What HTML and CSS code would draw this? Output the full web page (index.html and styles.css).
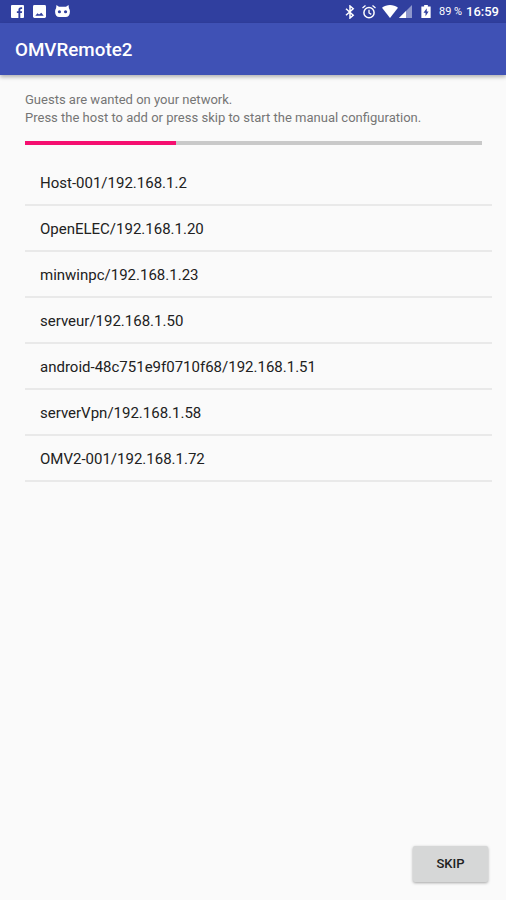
FILE: index.html
```html
<!DOCTYPE html>
<html lang="en">
<head>
    <meta charset="UTF-8">
    <meta name="viewport" content="width=device-width, initial-scale=1.0">
    <title>OMVRemote2</title>
    <link rel="stylesheet" href="styles.css">
</head>
<body>
    <!-- Status Bar -->
    <div class="status-bar">
        <div class="status-left">
            <svg width="13" height="13" viewBox="0 0 14 14">
                <rect width="14" height="14" rx="1" fill="#fff"/>
                <path d="M8 14V8.7H6.3V6.6H8V5.2C8 3.3 9 2.3 11 2.3h1v2h-1c-.7 0-1 .3-1 1v1.3h2l-.3 2.1H10V14z" fill="#303f9f"/>
            </svg>
            <svg width="13" height="13" viewBox="0 0 14 14">
                <rect width="14" height="14" rx="1.5" fill="#fff"/>
                <path d="M2.5 11.500l2.300-2.500 1.700 1.300L9 8.300l2.500 3.200z" fill="#303f9f"/>
            </svg>
            <svg width="15" height="13" viewBox="0 0 16 14">
                <path d="M1.500 0l2.700 2h7.600l2.700-2 .4 3.500c.7.8 1.100 2 1.100 3.500 0 4-2 6-4.500 6h-7C2 13 0 11 0 7c0-1.500.4-2.700 1.100-3.500z" fill="#fff"/>
                <circle cx="4.700" cy="7.300" r="1.700" fill="#303f9f"/>
                <circle cx="11.300" cy="7.300" r="1.700" fill="#303f9f"/>
            </svg>
        </div>
        <div class="status-right">
            <svg class="bluetooth" width="10" height="14" viewBox="0 0 10 14">
                <path d="M1 3.700l7.200 6.500L5 13V1l3.200 2.800L1 10.300" fill="none" stroke="#fff" stroke-width="1.500"/>
            </svg>
            <svg class="alarm" width="14" height="14" viewBox="0 0 14 14">
                <circle cx="7" cy="7.700" r="5.100" fill="none" stroke="#fff" stroke-width="1.500"/>
                <path d="M.5 3L3.500.6M13.500 3L10.500.6M7 4.700v3.300l2.300 1.400" fill="none" stroke="#fff" stroke-width="1.300"/>
            </svg>
            <svg class="wifi" width="16" height="13" viewBox="0 0 16 13">
                <path d="M0 2.700C4.500-.9 11.500-.9 16 2.700L8 13z" fill="#fff"/>
            </svg>
            <svg class="signal" width="13" height="13" viewBox="0 0 13 13">
                <path d="M13 0v13H0z" fill="#8e97cc"/>
                <path d="M7 6v7H0z" fill="#fff"/>
            </svg>
            <svg class="battery" width="10" height="13" viewBox="0 0 10 14">
                <path d="M3 0h4v1.500h3V14H0V1.500h3z" fill="#fff"/>
                <path d="M5.800 3.500L2.300 8.300h2.200V12l3.300-5H5.800z" fill="#303f9f"/>
            </svg>
            <span class="percent">89 %</span>
            <span class="clock">16:59</span>
        </div>
    </div>

    <!-- Header Section -->
    <div class="header">OMVRemote2</div>

    <!-- Main Container -->
    <div class="main-container">
        <p class="info">Guests are wanted on your network.<br>Press the host to add or press skip to start the manual configuration.</p>

        <div class="progress">
            <div class="progress-value"></div>
        </div>

        <ul class="host-list">
            <li>Host-001/192.168.1.2</li>
            <li>OpenELEC/192.168.1.20</li>
            <li>minwinpc/192.168.1.23</li>
            <li>serveur/192.168.1.50</li>
            <li>android-48c751e9f0710f68/192.168.1.51</li>
            <li>serverVpn/192.168.1.58</li>
            <li>OMV2-001/192.168.1.72</li>
        </ul>
    </div>

    <!-- Footer Section -->
    <div class="footer">
        <button class="skip-button">SKIP</button>
    </div>
</body>
</html>
```

FILE: styles.css
```css
/* Global Styles */
body {
    font-family: Roboto, sans-serif;
    margin: 0;
    height: 900px;
    display: flex;
    flex-direction: column;
    background: #fafafa;
    color: #212121;
    overflow: hidden;
}

svg {
    display: block;
    flex: none;
}

/* Status Bar */
.status-bar {
    height: 23px;
    padding: 0 7px 0 11px;
    display: flex;
    justify-content: space-between;
    align-items: center;
    background: #303f9f;
    color: #fff;
}

.status-left,
.status-right {
    display: flex;
    align-items: center;
}

.status-left {
    gap: 9px;
}

.alarm {
    margin-left: 7px;
}

.wifi {
    margin-left: 6px;
}

.signal {
    margin-left: 1px;
}

.battery {
    margin-left: 9px;
}

.percent {
    width: 27px;
    margin-left: 8px;
    font-size: 11px;
    white-space: nowrap;
}

.clock {
    width: 33px;
    font-size: 13px;
    font-weight: 500;
}

/* Header Section */
.header {
    height: 52px;
    line-height: 54px;
    padding-left: 15px;
    background: #3f51b5;
    box-shadow: 0 2px 4px rgba(0, 0, 0, 0.3);
    color: #fff;
    font-size: 18.8px;
    font-weight: 500;
}

/* Main Container */
.main-container {
    flex: 1;
    padding: 16px 14px 0 25px;
}

.info {
    margin: 0;
    font-size: 13.03px;
    line-height: 18px;
    color: #757575;
    white-space: nowrap;
}

.progress {
    height: 4px;
    margin: 14px 10px 15px 0;
    background: #c9c9c9;
}

.progress-value {
    width: 151px;
    height: 4px;
    background: #f50f70;
}

/* Host List */
.host-list {
    list-style: none;
    margin: 0;
    padding: 0;
}

.host-list li {
    height: 44px;
    line-height: 47px;
    padding-left: 15px;
    border-bottom: 2px solid #e9e9e9;
    font-size: 15px;
}

/* Footer Section */
.footer {
    display: flex;
    justify-content: flex-end;
    padding: 0 18px 18px 0;
}

.skip-button {
    width: 75px;
    height: 36px;
    padding: 0 0 2px;
    border: none;
    border-radius: 2px;
    background: #d6d7d7;
    box-shadow: 0 1px 3px rgba(0, 0, 0, 0.35);
    color: #212121;
    font-family: inherit;
    font-size: 13px;
    font-weight: 500;
}
```
